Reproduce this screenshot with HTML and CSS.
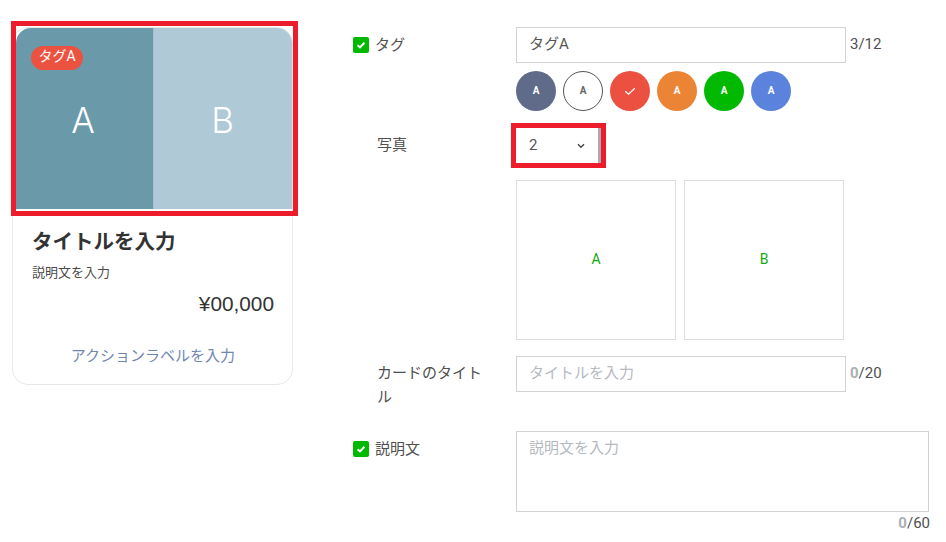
FILE: index.html
```html
<!DOCTYPE html>
<html lang="ja">
<head>
    <meta charset="UTF-8">
    <meta name="viewport" content="width=device-width, initial-scale=1.0">
    <title>カードタイプメッセージ</title>
    <link rel="stylesheet" href="styles.css">
</head>
<body>

    <div class="page">

        <div class="preview-card">
            <div class="preview-photos">
                <div class="preview-photo photo-a">A</div>
                <div class="preview-photo photo-b">B</div>
                <span class="preview-tag">タグA</span>
            </div>
            <div class="preview-body">
                <h2 class="preview-title">タイトルを入力</h2>
                <p class="preview-desc">説明文を入力</p>
                <p class="preview-price">¥00,000</p>
                <p class="preview-action">アクションラベルを入力</p>
            </div>
            <div class="red-frame frame-photos"></div>
        </div>

        <div class="form">

            <div class="row row-tag">
                <div class="label">
                    <span class="check"><svg width="10" height="10" viewBox="0 0 10 10"><path d="M1.6 5.2 L4 7.4 L8.4 2.8" fill="none" stroke="#fff" stroke-width="2"/></svg></span>
                    タグ
                </div>
                <div class="field">
                    <div class="input-line">
                        <div class="input">タグA</div>
                        <span class="count">3/12</span>
                    </div>
                    <div class="swatches">
                        <span class="swatch navy">A</span>
                        <span class="swatch outline">A</span>
                        <span class="swatch red"><svg width="14" height="14" viewBox="0 0 14 14"><path d="M2.2 7.2 L5.6 10.2 L11.8 4.2" fill="none" stroke="#fff" stroke-width="1.2"/></svg></span>
                        <span class="swatch orange">A</span>
                        <span class="swatch green">A</span>
                        <span class="swatch blue">A</span>
                    </div>
                </div>
            </div>

            <div class="row row-photo">
                <div class="label label-plain">写真</div>
                <div class="field">
                    <div class="select">
                        2
                        <svg class="chevron" width="8" height="6" viewBox="0 0 8 6"><path d="M1 1.2 L4 4.2 L7 1.2" fill="none" stroke="#444" stroke-width="1.4"/></svg>
                        <div class="red-frame frame-select"></div>
                    </div>
                    <div class="photo-boxes">
                        <div class="photo-box">A</div>
                        <div class="photo-box">B</div>
                    </div>
                </div>
            </div>

            <div class="row row-title">
                <div class="label label-plain label-wrap">カードのタイトル</div>
                <div class="field">
                    <div class="input-line">
                        <div class="input placeholder">タイトルを入力</div>
                        <span class="count"><b>0</b>/20</span>
                    </div>
                </div>
            </div>

            <div class="row row-desc">
                <div class="label">
                    <span class="check"><svg width="10" height="10" viewBox="0 0 10 10"><path d="M1.6 5.2 L4 7.4 L8.4 2.8" fill="none" stroke="#fff" stroke-width="2"/></svg></span>
                    説明文
                </div>
                <div class="field">
                    <div class="textarea placeholder">説明文を入力</div>
                    <div class="count count-right"><b>0</b>/60</div>
                </div>
            </div>

        </div>
    </div>

</body>
</html>
```

FILE: styles.css
```css
body {
    font-family: Roboto, "Noto Sans CJK JP", sans-serif;
    margin: 0;
    background: #fff;
    color: #444;
    overflow: hidden;
}

.page {
    display: flex;
    align-items: flex-start;
    padding: 27px 0 0 12px;
}

/* preview card */
.preview-card {
    position: relative;
    box-sizing: border-box;
    width: 281px;
    height: 358px;
    border: 1px solid #e6e8ea;
    border-radius: 16px;
    flex-shrink: 0;
}

.preview-photos {
    display: flex;
    position: relative;
    height: 181px;
    margin-left: 3px;
    border-radius: 15px 15px 0 0;
    overflow: hidden;
}

.preview-photo {
    display: flex;
    align-items: center;
    justify-content: center;
    color: #fff;
    font-family: Inter, sans-serif;
    font-size: 35px;
    font-weight: 300;
    padding-top: 2px;
    box-sizing: border-box;
}

.photo-a {
    width: 137px;
    padding-right: 3px;
    background: #6a99aa;
}

.photo-b {
    flex: 1;
    padding-right: 1px;
    background: #afc9d6;
    border-left: 1px solid #a9c0d2;
}

.preview-tag {
    position: absolute;
    left: 15px;
    top: 18px;
    width: 52px;
    height: 24px;
    line-height: 20px;
    text-align: center;
    border-radius: 12px;
    background: #ec5240;
    color: #fff;
    font-size: 14px;
}

.preview-body {
    padding: 0 18px 0 19px;
}

.preview-title {
    margin: 18px 0 0;
    font-size: 20.5px;
    line-height: 30px;
    font-weight: 700;
    color: #333;
}

.preview-desc {
    margin: 6px 0 0;
    font-size: 13px;
    line-height: 20px;
    color: #4a4a4a;
}

.preview-price {
    margin: 6px 0 0;
    font-family: "Liberation Sans", sans-serif;
    font-size: 20.8px;
    line-height: 30px;
    text-align: right;
    color: #333;
}

.preview-action {
    margin: 26px 0 0;
    font-size: 15px;
    line-height: 22px;
    text-align: center;
    color: #6f86b0;
}

.red-frame {
    position: absolute;
    box-sizing: border-box;
    border: 5px solid #ed1c2b;
}

.frame-photos {
    left: -2px;
    top: -7px;
    width: 287px;
    height: 195px;
}

.frame-select {
    left: -5px;
    top: -5px;
    width: 95px;
    height: 45px;
}

/* form */
.form {
    margin-left: 60px;
    flex: 1;
}

.row {
    display: flex;
    align-items: flex-start;
}

.row-photo {
    margin-top: 17px;
}

.row-title {
    margin-top: 16px;
}

.row-desc {
    margin-top: 22px;
}

.label {
    display: flex;
    align-items: center;
    gap: 6px;
    box-sizing: border-box;
    width: 163px;
    min-height: 35px;
    font-size: 15px;
    line-height: 24px;
    color: #505050;
    flex-shrink: 0;
}

.label-plain {
    padding-left: 24px;
    padding-bottom: 2px;
}

.label-wrap {
    padding-right: 28px;
    padding-top: 5px;
    padding-bottom: 0;
    align-items: flex-start;
}

.check {
    display: flex;
    align-items: center;
    justify-content: center;
    width: 16px;
    height: 16px;
    border-radius: 2px;
    background: #00b900;
}

.field {
    width: 414px;
}

.input-line {
    display: flex;
    align-items: center;
}

.input {
    box-sizing: border-box;
    width: 330px;
    height: 36px;
    line-height: 33px;
    padding-left: 12px;
    border: 1px solid #d0d2d4;
    font-size: 15px;
    color: #555;
}

.input.placeholder {
    color: #b5babf;
}

.count {
    margin-left: 4px;
    font-size: 15px;
    line-height: 30px;
    margin-bottom: 2px;
    color: #505050;
}

.count b {
    color: #aab0b5;
    font-weight: 700;
}

.count-right {
    margin: 1px 0 0;
    line-height: 20px;
    text-align: right;
}

.swatches {
    display: flex;
    gap: 7px;
    margin-top: 8px;
}

.swatch {
    display: flex;
    align-items: center;
    justify-content: center;
    box-sizing: border-box;
    width: 40px;
    height: 40px;
    padding-bottom: 1px;
    border-radius: 50%;
    color: #fff;
    font-size: 10px;
    font-weight: 700;
}

.navy { background: #5f6b88; }
.outline { border: 1px solid #555; color: #666; }
.red { background: #ec5040; }
.orange { background: #ec8436; }
.green { background: #00b900; }
.blue { background: #5b82dc; }

.select {
    position: relative;
    display: flex;
    align-items: center;
    box-sizing: border-box;
    width: 85px;
    height: 35px;
    padding: 0 0 2px 13px;
    border-right: 3px solid #a9a9b3;
    font-size: 15px;
    color: #555;
}

.chevron {
    position: absolute;
    left: 61px;
    top: 15px;
}

.photo-boxes {
    display: flex;
    gap: 8px;
    margin-top: 17px;
}

.photo-box {
    display: flex;
    align-items: center;
    justify-content: center;
    box-sizing: border-box;
    width: 160px;
    height: 160px;
    padding-bottom: 2px;
    border: 1px solid #dcdee0;
    color: #12a812;
    font-size: 14px;
}

.textarea {
    box-sizing: border-box;
    width: 413px;
    height: 81px;
    padding: 4px 12px;
    border: 1px solid #d0d2d4;
    font-size: 15px;
    line-height: 24px;
    color: #b5babf;
}
```
